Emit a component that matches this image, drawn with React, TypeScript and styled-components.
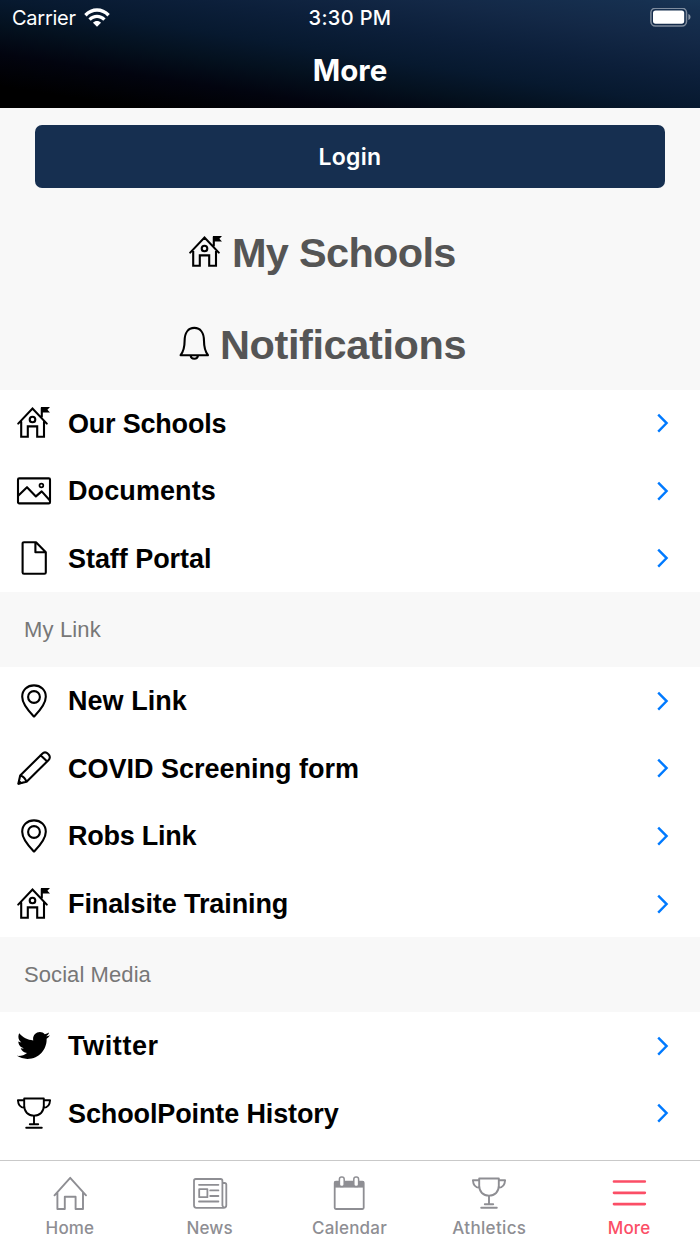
import React from 'react';
import styled, { createGlobalStyle, css } from 'styled-components';
import { FaTwitter } from 'react-icons/fa';

const GlobalStyle = createGlobalStyle`
  * { box-sizing: border-box; }
  body { margin: 0; background: #fff; }
`;

const helvetica = css`font-family: 'Liberation Sans', Helvetica, Arial, sans-serif;`;
const system = css`font-family: Inter, 'Liberation Sans', sans-serif;`;

const Screen = styled.div`
  display: flex;
  flex-direction: column;
  width: 700px;
  height: 1244px;
  overflow: hidden;
  background: #fff;
  ${helvetica}
`;

const Header = styled.header`
  flex: none;
  height: 108px;
  color: #fff;
  background: linear-gradient(to top right, #000 0%, #000 10%, #02040f 25%, #04111f 38%, #07192f 50%, #0c1f3a 64%, #132846 80%, #163050 95%, #183555 100%);
  ${system}
`;

const StatusBar = styled.div`
  display: grid;
  grid-template-columns: 1fr auto 1fr;
  align-items: center;
  height: 36px;
  padding: 0 9px 0 12px;
`;

const Carrier = styled.div`
  display: flex;
  align-items: center;
  gap: 8px;
  font-size: 20px;
  letter-spacing: -0.25px;
`;

const Clock = styled.div`
  margin-left: -3px;
  font-size: 20px;
  font-weight: 500;
  letter-spacing: 0.35px;
`;

const BatterySlot = styled.div`
  display: flex;
  justify-content: flex-end;
`;

const Title = styled.h1`
  margin: 0;
  line-height: 69px;
  font-size: 29.5px;
  font-weight: 700;
  text-align: center;
`;

const Intro = styled.section`
  flex: none;
  height: 281.5px;
  padding: 17px 35px 0;
  background: #f8f8f8;
`;

const LoginButton = styled.button`
  display: block;
  width: 100%;
  height: 63px;
  border: 0;
  border-radius: 7px;
  background: #162f50;
  color: #fff;
  font-size: 23px;
  font-weight: 600;
  letter-spacing: 0.3px;
  ${system}
`;

const BigLink = styled.div<{ $inset: number; $gap: number; $spacing: number }>`
  display: flex;
  align-items: center;
  gap: ${p => p.$gap}px;
  height: 92px;
  padding-left: ${p => p.$inset}px;
  color: #555;
  font-size: 41.5px;
  font-weight: 700;
  letter-spacing: ${p => p.$spacing}px;
  white-space: nowrap;
  span { padding-top: 2px; }
  svg { color: #000; }
`;

const BigLinks = styled.div`
  padding-top: 18px;
`;

const Row = styled.div`
  flex: none;
  display: flex;
  align-items: center;
  height: 67.6px;
  padding: 0 31px 0 17px;
  background: #fff;
`;

const RowLabel = styled.span<{ $spacing: number }>`
  flex: 1;
  margin-left: 17px;
  padding-top: 2px;
  color: #000;
  font-size: 27px;
  font-weight: 700;
  letter-spacing: ${p => p.$spacing}px;
  white-space: nowrap;
`;

const SectionHeading = styled.h2<{ $spacing: number }>`
  flex: none;
  margin: 0;
  height: 74.7px;
  padding-left: 24px;
  line-height: 75px;
  background: #f8f8f8;
  color: #777;
  font-size: 22px;
  font-weight: 400;
  letter-spacing: ${p => p.$spacing}px;
`;

const List = styled.main`
  flex: 1;
  min-height: 0;
  display: flex;
  flex-direction: column;
  overflow: hidden;
`;

const TabBar = styled.nav`
  flex: none;
  display: grid;
  grid-template-columns: repeat(5, 139.8px);
  height: 84px;
  border-top: 1px solid #c9c9c9;
  background: #fff;
`;

const Tab = styled.div<{ $active?: boolean; $spacing: number }>`
  display: flex;
  flex-direction: column;
  align-items: center;
  padding-top: 15px;
  color: ${p => (p.$active ? '#fb4e66' : '#8e8e93')};
  font-size: 17px;
  font-weight: 500;
  line-height: 22px;
  letter-spacing: ${p => p.$spacing}px;
  ${system}
  span { margin-top: 7px; }
`;

const Glyph = styled.svg.attrs({ width: 34, height: 34, viewBox: '0 0 34 34' })`
  flex: none;
  overflow: visible;
  fill: none;
  stroke: currentColor;
  stroke-width: 2.1;
  stroke-linejoin: round;
  stroke-linecap: round;
`;

const BirdSlot = styled.div`
  display: flex;
  align-items: center;
  width: 34px;
  height: 34px;
`;

const School = () => (
  <Glyph>
    <path d="M1.2 17.6 15.5 2.5 29.8 17.6M4.2 15.9V30.8H10.8V20.4H20.2V30.8H27V15.9M24.8 10.8V2" strokeLinejoin="miter" />
    <circle cx="15.5" cy="13.5" r="2.8" />
    <path d="M24 .9H33L30.4 3.7 33 6.5H24Z" fill="currentColor" stroke="none" />
  </Glyph>
);
const Bell = () => (
  <Glyph>
    <path d="M1.6 28.2C5 23.8 5.6 20 5.6 14 5.6 5.5 9.4.9 15.3.9S25 5.5 25 14C25 20 25.6 23.8 29 28.2ZM11.6 28.6C12.2 32.8 18.4 32.8 19 28.6" />
  </Glyph>
);
const Picture = () => (
  <Glyph>
    <rect x="1" y="4.4" width="32" height="25" rx="1.2" />
    <path d="M1.2 21.8 10 13.2 18.9 22.4 24.7 17.4 32.7 26.3" />
    <circle cx="24.4" cy="11.5" r="1.9" strokeWidth="1.7" />
  </Glyph>
);
const Paper = () => (
  <Glyph>
    <path d="M7 1.2H19L28.8 11.2V31.4Q28.8 32.8 27.4 32.8H7Q5.6 32.8 5.6 31.4V2.6Q5.6 1.2 7 1.2ZM18.4 1.5V11.2H28.4" />
  </Glyph>
);
const Pin = () => (
  <Glyph>
    <path d="M17 32.6C12.5 28 5.2 20.8 5.2 12.8 5.2 6 10.3 1.4 17 1.4S28.8 6 28.8 12.8C28.8 20.8 21.5 28 17 32.6Z" />
    <circle cx="17" cy="13" r="5.9" />
  </Glyph>
);
const Pencil = () => (
  <Glyph>
    <path d="M1.4 32.6 3.2 24.6 25 2.9C27 .9 29.4 1.2 31.2 3 33.2 4.9 33.4 7.2 31.4 9.2L9.6 30.8ZM3.4 24.6Q7.8 26.2 9.4 30.6M23.6 4.3 30.2 10.4" />
    <path d="M1.2 32.8 2 29.2 4.8 32Z" fill="currentColor" strokeWidth="1" />
  </Glyph>
);
const Trophy = () => (
  <Glyph>
    <path d="M7.2 2.5H26.8V9.8C26.8 15.8 22.8 19.6 17 19.6S7.2 15.8 7.2 9.8ZM7 4.2H.9C1.2 8.8 3.4 11.6 7.4 11.9M27 4.2H33.1C32.8 8.8 30.6 11.6 26.6 11.9M17 19.8V28.3M12.8 28.3H21.2M9.2 31.8H24.8" strokeWidth="1.9" />
  </Glyph>
);
const Home = () => (
  <Glyph>
    <path d="M1.5 19.3 17.2 1.8 33 19.3M4.4 16.8V33H11.8V20.8H22.6V33H30V16.8" strokeWidth="1.9" />
  </Glyph>
);
const News = () => (
  <Glyph>
    <g strokeWidth="1.8">
      <path d="M29.4 29.5V4.8Q29.4 3 27.6 3H2.8Q1 3 1 4.8V29.3Q1 31.8 3.4 31.8H30.6Q33.3 31.8 33.3 29.3V8.6Q33.3 7 31.6 7H29.6M29.4 28.2Q29.4 31.6 32 31.4" />
      <path d="M6 8.8H25.4M17.2 14.4H25.4M17.2 20H25.4M6 25.5H25.4M6.2 13.2H14.4V21.2H6.2Z" />
    </g>
  </Glyph>
);
const Calendar = () => (
  <Glyph>
    <rect x="2.7" y="5.6" width="29" height="27.4" rx="1.2" strokeWidth="1.8" />
    <path d="M2.4 5.4H32V11.6H2.4Z" fill="currentColor" stroke="none" />
    <rect x="7.4" y="1" width="4.8" height="9.6" rx="2.2" fill="#fff" strokeWidth="1.5" />
    <rect x="21.8" y="1" width="4.8" height="9.6" rx="2.2" fill="#fff" strokeWidth="1.5" />
  </Glyph>
);
const Menu = () => (
  <Glyph>
    <path d="M2 5.5H32.8M2 16.8H32.8M2 28.1H32.8" strokeWidth="2.7" />
  </Glyph>
);
const Bird = () => (
  <BirdSlot><FaTwitter size={33} /></BirdSlot>
);

const Chevron = () => (
  <svg width="14" height="20" viewBox="0 0 14 20" fill="none" stroke="#007aff" strokeWidth="2.4">
    <path d="M3.2 1.6 11.6 10.1 3.2 18.6" />
  </svg>
);

const Wifi = () => (
  <svg width="26" height="20" viewBox="0 0 26 20" fill="#fff">
    <path d="M.2 6C7.4-1.8 18.6-1.8 25.8 6L23.4 8.4C17.6 2.2 8.4 2.2 2.6 8.4Z" />
    <path d="M4.4 10.4C9.2 5.4 16.8 5.4 21.6 10.4L19.2 12.8C15.6 9.2 10.4 9.2 6.8 12.8Z" />
    <path d="M13 18.8 9 14.8C11 12.5 15 12.5 17 14.8Z" />
  </svg>
);

const Battery = () => (
  <svg width="41" height="20" viewBox="0 0 41 20" fill="none">
    <rect x=".9" y=".2" width="35.6" height="17.8" rx="4.4" stroke="#fff" strokeOpacity=".45" strokeWidth="1.5" />
    <rect x="3" y="2.5" width="31.2" height="13.2" rx="2.6" fill="#fff" />
    <path d="M38.4 6.1C41.2 7.3 41.2 10.9 38.4 12.1Z" fill="#fff" fillOpacity=".5" />
  </svg>
);

type ItemProps = { icon: React.ReactNode; label: string; spacing?: number };
const Item = ({ icon, label, spacing = 0 }: ItemProps) => (
  <Row>
    {icon}
    <RowLabel $spacing={spacing}>{label}</RowLabel>
    <Chevron />
  </Row>
);

export default function App() {
  return (
    <Screen>
      <GlobalStyle />
      <Header>
        <StatusBar>
          <Carrier>Carrier<Wifi /></Carrier>
          <Clock>3:30 PM</Clock>
          <BatterySlot><Battery /></BatterySlot>
        </StatusBar>
        <Title>More</Title>
      </Header>
      <List>
        <Intro>
          <LoginButton>Login</LoginButton>
          <BigLinks>
            <BigLink $inset={154} $gap={9} $spacing={-0.7}><School /><span>My Schools</span></BigLink>
            <BigLink $inset={144} $gap={7} $spacing={-0.4}><Bell /><span>Notifications</span></BigLink>
          </BigLinks>
        </Intro>
        <Item icon={<School />} label="Our Schools" spacing={-0.2} />
        <Item icon={<Picture />} label="Documents" spacing={0.1} />
        <Item icon={<Paper />} label="Staff Portal" spacing={-0.05} />
        <SectionHeading $spacing={0.15}>My Link</SectionHeading>
        <Item icon={<Pin />} label="New Link" spacing={0.05} />
        <Item icon={<Pencil />} label="COVID Screening form" />
        <Item icon={<Pin />} label="Robs Link" spacing={-0.25} />
        <Item icon={<School />} label="Finalsite Training" spacing={-0.1} />
        <SectionHeading $spacing={0.08}>Social Media</SectionHeading>
        <Item icon={<Bird />} label="Twitter" spacing={0.6} />
        <Item icon={<Trophy />} label="SchoolPointe History" spacing={-0.12} />
      </List>
      <TabBar>
        <Tab $spacing={0.15}><Home /><span>Home</span></Tab>
        <Tab $spacing={0.1}><News /><span>News</span></Tab>
        <Tab $spacing={0.2}><Calendar /><span>Calendar</span></Tab>
        <Tab $spacing={0.35}><Trophy /><span>Athletics</span></Tab>
        <Tab $active $spacing={0.15}><Menu /><span>More</span></Tab>
      </TabBar>
    </Screen>
  );
}
